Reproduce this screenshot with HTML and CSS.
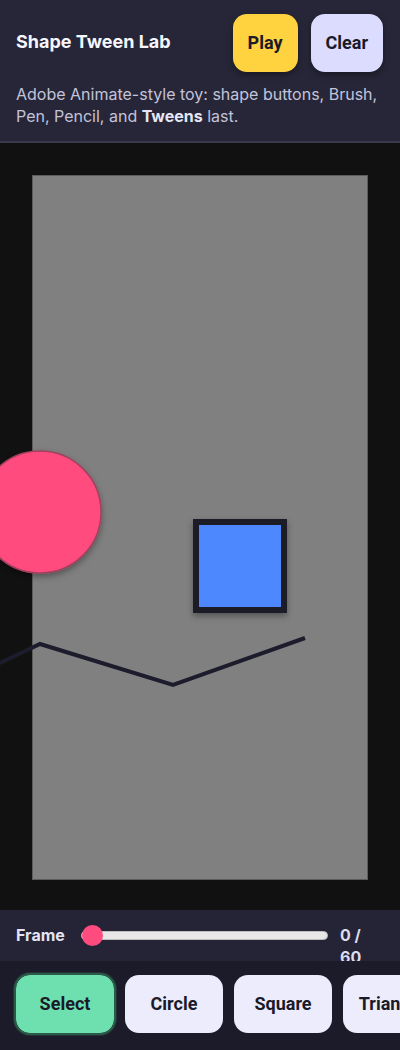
FILE: index.html
```html
<!DOCTYPE html>
<html lang="en">
<head>
<meta charset="utf-8">
<title>Shape Tween Lab</title>
<link rel="stylesheet" href="styles.css">
</head>
<body>
<div class="app">
  <header class="header">
    <div class="header-row">
      <h1 class="title">Shape Tween Lab</h1>
      <div class="header-actions">
        <button class="btn btn-play">Play</button>
        <button class="btn btn-clear">Clear</button>
      </div>
    </div>
    <p class="desc">Adobe Animate-style toy: shape buttons, Brush, Pen, Pencil, and <strong>Tweens</strong> last.</p>
  </header>
  <main class="stage">
    <div class="canvas"></div>
    <svg class="drawing" width="400" height="767" viewBox="0 0 400 767">
      <defs>
        <filter id="sh" x="-30%" y="-30%" width="160%" height="160%">
          <feDropShadow dx="0" dy="3" stdDeviation="3" flood-color="#000" flood-opacity="0.35"/>
        </filter>
      </defs>
      <circle cx="40" cy="369" r="61" fill="#ff4b7e" stroke="#a3405f" stroke-width="1.5" filter="url(#sh)"/>
      <rect x="196" y="379" width="88" height="88" fill="#4d88ff" stroke="#1a1a28" stroke-width="6" filter="url(#sh)"/>
      <polyline points="-2,521 40,501 173,542 305,495" fill="none" stroke="#1c1c2c" stroke-width="4" stroke-linejoin="miter"/>
    </svg>
  </main>
  <section class="frame-bar">
    <span class="frame-label">Frame</span>
    <div class="slider-wrap"><input class="slider" type="range" min="0" max="60" value="0"></div>
    <span class="frame-value">0 / 60</span>
  </section>
  <nav class="toolbar">
    <button class="tool tool-active">Select</button>
    <button class="tool">Circle</button>
    <button class="tool">Square</button>
    <button class="tool">Triangle</button>
    <button class="tool">Brush</button>
  </nav>
</div>
</body>
</html>
```
FILE: styles.css
```css
* { box-sizing: border-box; }
html, body {
  margin: 0;
  padding: 0;
  background: #111111;
  font-family: Inter, "Noto Sans", sans-serif;
}
.app {
  width: 400px;
  height: 1050px;
  display: flex;
  flex-direction: column;
  overflow: hidden;
}
.header {
  background: #262638;
  border-bottom: 2px solid #3a3a4e;
  padding: 14px 17px 14px 16px;
  height: 143px;
}
.header-row {
  display: flex;
  align-items: center;
  justify-content: space-between;
}
.title {
  margin: 0 0 3px;
  font-size: 18px;
  font-weight: 700;
  color: #f6f6ff;
}
.header-actions {
  display: flex;
  gap: 13px;
}
.btn {
  height: 58px;
  padding: 0 15px 2px;
  border: none;
  border-radius: 14px;
  font-family: Roboto, sans-serif;
  font-weight: 700;
  font-size: 18px;
  color: #1a1a28;
  box-shadow: 0 3px 6px rgba(0,0,0,0.35);
}
.btn-play { background: #ffd23f; }
.btn-clear { background: #dcdcff; }
.desc {
  margin: 11px 0 0;
  font-size: 16px;
  line-height: 22px;
  color: #c3c3da;
}
.desc strong { color: #e6e6f6; font-weight: 700; }
.stage {
  position: relative;
  height: 767px;
  background: #111111;
  padding: 32px 32px 30px;
}
.canvas {
  height: 100%;
  background: #808080;
  border: 1px solid #5c5c5c;
}
.drawing {
  position: absolute;
  left: 0;
  top: 0;
  overflow: visible;
}
.frame-bar {
  height: 51px;
  background: #242436;
  display: flex;
  align-items: flex-start;
  padding: 14px 16px 0;
  overflow: hidden;
}
.frame-label {
  font-size: 16px;
  line-height: 22px;
  font-weight: 700;
  color: #e3e3f3;
  margin-right: 16px;
}
.slider-wrap {
  flex: 1;
  height: 22px;
  display: flex;
  align-items: center;
}
.slider {
  -webkit-appearance: none;
  appearance: none;
  width: 100%;
  height: 9px;
  margin: 0;
  background: #e8e6e6;
  border-radius: 5px;
  border: 1px solid #bdbdbd;
}
.slider::-webkit-slider-thumb {
  -webkit-appearance: none;
  width: 21px;
  height: 21px;
  border-radius: 50%;
  background: #ff4b7e;
  border: none;
}
.frame-value {
  flex: 0 0 44px;
  width: 44px;
  margin-left: 12px;
  font-size: 16px;
  line-height: 22px;
  font-weight: 700;
  color: #dcdcee;
}
.toolbar {
  flex: 1;
  background: #1b1b29;
  display: flex;
  gap: 11px;
  padding: 14px 16px;
  overflow: hidden;
}
.tool {
  flex: 0 0 98px;
  height: 58px;
  padding-bottom: 3px;
  border: none;
  border-radius: 14px;
  background: #ececfc;
  font-family: Roboto, sans-serif;
  font-weight: 700;
  font-size: 18px;
  color: #1a1a28;
  white-space: nowrap;
}
.tool-active {
  background: #6ee0b0;
  outline: 2px solid #2c5a48;
  box-shadow: 0 0 0 3px rgba(44,90,72,0.4);
}
```
